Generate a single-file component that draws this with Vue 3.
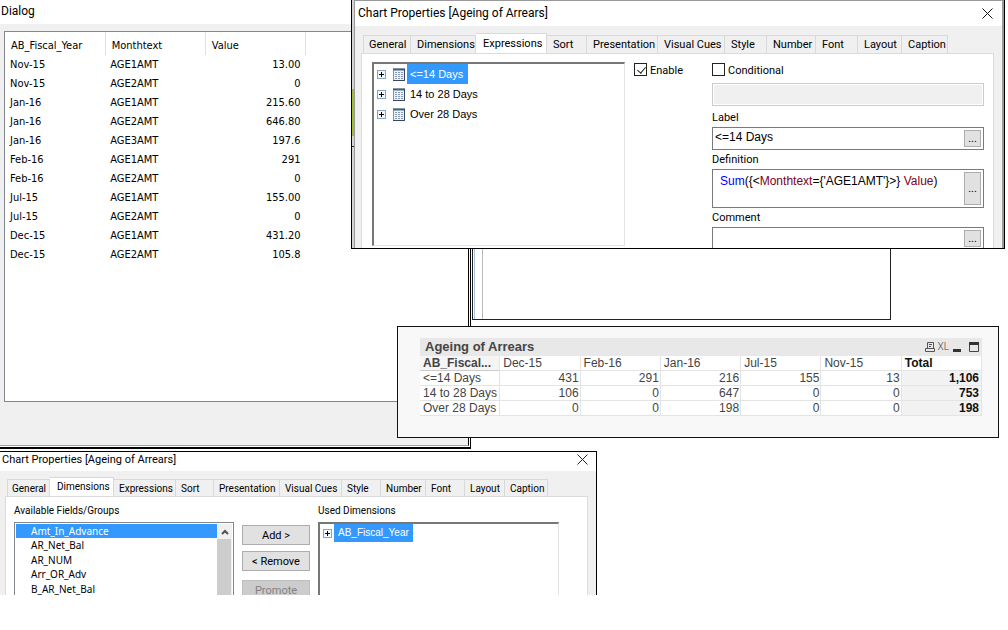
<script setup>
import { ref } from 'vue'

const fiscalRows = [
  ['Nov-15', 'AGE1AMT', '13.00'],
  ['Nov-15', 'AGE2AMT', '0'],
  ['Jan-16', 'AGE1AMT', '215.60'],
  ['Jan-16', 'AGE2AMT', '646.80'],
  ['Jan-16', 'AGE3AMT', '197.6'],
  ['Feb-16', 'AGE1AMT', '291'],
  ['Feb-16', 'AGE2AMT', '0'],
  ['Jul-15', 'AGE1AMT', '155.00'],
  ['Jul-15', 'AGE2AMT', '0'],
  ['Dec-15', 'AGE1AMT', '431.20'],
  ['Dec-15', 'AGE2AMT', '105.8'],
]

const tabNames = ['General', 'Dimensions', 'Expressions', 'Sort', 'Presentation', 'Visual Cues', 'Style', 'Number', 'Font', 'Layout', 'Caption']
const largeWidths = [48, 65, 71, 40, 71, 67, 42, 49, 42, 44, 46]
const smallWidths = [43, 64, 62, 38, 66, 62, 39, 45, 39, 40, 43]

const expressions = ['<=14 Days', '14 to 28 Days', 'Over 28 Days']
const fields = ['Amt_In_Advance', 'AR_Net_Bal', 'AR_NUM', 'Arr_OR_Adv', 'B_AR_Net_Bal']

const pivotHead = ['AB_Fiscal...', 'Dec-15', 'Feb-16', 'Jan-16', 'Jul-15', 'Nov-15', 'Total']
const pivotRows = [
  ['<=14 Days', '431', '291', '216', '155', '13', '1,106'],
  ['14 to 28 Days', '106', '0', '647', '0', '0', '753'],
  ['Over 28 Days', '0', '0', '198', '0', '0', '198'],
]

const enabled = ref(true)
const conditional = ref(false)
const label = ref('<=14 Days')
const comment = ref('')
</script>

<template>
  <main class="desktop">
    <section class="dialog" aria-label="Dialog">
      <div class="dialog-inner">
        <h2 class="title">Dialog</h2>
        <div class="dialog-body">
          <table class="fiscal">
            <thead>
              <tr><th>AB_Fiscal_Year</th><th>Monthtext</th><th>Value</th></tr>
            </thead>
            <tbody>
              <tr v-for="(row, i) in fiscalRows" :key="i">
                <td v-for="(cell, j) in row" :key="j">{{ cell }}</td>
              </tr>
            </tbody>
          </table>
        </div>
      </div>
    </section>

    <div class="back-panel"><div class="back-inner"></div></div>

    <section class="props" aria-label="Chart Properties, Expressions">
      <div class="edge"><i class="edge-green"></i><i class="edge-dark"></i></div>
      <div class="props-frame">
        <header class="titlebar">
          <h2 class="title">Chart Properties [Ageing of Arrears]</h2>
          <button class="close" aria-label="Close">
            <svg width="11" height="11" viewBox="0 0 11 11"><path d="M.5.5l10 10M10.5.5l-10 10" stroke="#111" fill="none" /></svg>
          </button>
        </header>
        <div class="tabs" role="tablist">
          <button v-for="(t, i) in tabNames" :key="t" role="tab" class="tab" :class="{ active: i === 2 }" :style="{ width: largeWidths[i] + 'px' }">{{ t }}</button>
        </div>
        <div class="page">
          <ul class="tree">
            <li v-for="(e, i) in expressions" :key="e">
              <button class="expander" aria-label="Expand">
                <svg width="9" height="9" viewBox="0 0 9 9"><rect x=".5" y=".5" width="8" height="8" fill="#f4f8fc" stroke="#8aa3bd" /><path d="M2 4.5h5M4.5 2v5" stroke="#000" /></svg>
              </button>
              <svg class="grid-icon" width="12" height="13" viewBox="0 0 12 13">
                <rect x=".5" y=".5" width="11" height="12" fill="#eef2f8" stroke="#8090a8" />
                <path d="M0 .5h12" stroke="#8794a8" /><path d="M0 1.5h12" stroke="#4c5b74" /><path d="M1 2.5h10" stroke="#9badc4" />
                <path d="M2 4.5h8M2 6.5h8M2 8.5h8M2 10.5h8" stroke="#8599b8" stroke-dasharray="2 1" />
                <path d="M0 12.5h11.5V1" stroke="#39475c" fill="none" />
              </svg>
              <span class="node" :class="{ selected: i === 0 }">{{ e }}</span>
            </li>
          </ul>
          <div class="enable">
            <label class="check"><input v-model="enabled" type="checkbox" />Enable</label>
          </div>
          <div class="form">
            <label class="check"><input v-model="conditional" type="checkbox" />Conditional</label>
            <input class="field disabled" aria-label="Condition" disabled />
            <label class="caption first" for="expr-label">Label</label>
            <div class="field"><input id="expr-label" v-model="label" /><button class="more">...</button></div>
            <label id="def-label" class="caption">Definition</label>
            <div class="field tall">
              <div class="code" role="textbox" aria-labelledby="def-label" contenteditable="true"><span class="fn">Sum</span>({&lt;<span class="name">Monthtext</span>={'AGE1AMT'}&gt;} <span class="name">Value</span>)</div>
              <button class="more">...</button>
            </div>
            <label class="caption" for="expr-comment">Comment</label>
            <div class="field"><input id="expr-comment" v-model="comment" /><button class="more">...</button></div>
          </div>
        </div>
      </div>
    </section>

    <section class="pivot" aria-label="Ageing of Arrears">
      <header class="pivot-title">
        <h2>Ageing of Arrears</h2>
        <button aria-label="Print">
          <svg width="10" height="10" viewBox="0 0 10 10"><path d="M2.5 6V.5h6V6M.5 9.5v-3h9v3zM4 2.5h3M4 4.5h2" stroke="#555" fill="none" /></svg>
        </button>
        <button class="xl">XL</button>
        <button aria-label="Minimize"><svg width="10" height="10" viewBox="0 0 10 10"><path d="M1 8.5h8" stroke="#333" stroke-width="3" /></svg></button>
        <button class="max" aria-label="Maximize"><svg width="10" height="10" viewBox="0 0 10 10"><path d="M.5 1v8.5h9V1" stroke="#444" fill="none" /><path d="M0 1.5h10" stroke="#333" stroke-width="3" /></svg></button>
      </header>
      <table class="pivot-table">
        <thead>
          <tr><th v-for="h in pivotHead" :key="h">{{ h }}</th></tr>
        </thead>
        <tbody>
          <tr v-for="row in pivotRows" :key="row[0]">
            <td v-for="(c, i) in row" :key="i">{{ c }}</td>
          </tr>
        </tbody>
      </table>
    </section>

    <section class="props small" aria-label="Chart Properties, Dimensions">
      <div class="props-frame">
        <header class="titlebar">
          <h2 class="title">Chart Properties [Ageing of Arrears]</h2>
          <button class="close" aria-label="Close">
            <svg width="11" height="11" viewBox="0 0 11 11"><path d="M.5.5l10 10M10.5.5l-10 10" stroke="#222" fill="none" /></svg>
          </button>
        </header>
        <div class="tabs" role="tablist">
          <button v-for="(t, i) in tabNames" :key="t" role="tab" class="tab" :class="{ active: i === 1 }" :style="{ width: smallWidths[i] + 'px' }">{{ t }}</button>
        </div>
        <div class="page">
          <div class="available">
            <h3 id="avail">Available Fields/Groups</h3>
            <div class="listbox">
              <ul role="listbox" aria-labelledby="avail">
                <li v-for="(f, i) in fields" :key="f" role="option" :class="{ selected: i === 0 }">{{ f }}</li>
              </ul>
              <div class="scroll">
                <button aria-label="Scroll up"><svg width="8" height="6" viewBox="0 0 8 6"><path d="M1 5l3-3 3 3" stroke="#505050" stroke-width="2" fill="none" /></svg></button>
                <div class="thumb"></div>
              </div>
            </div>
          </div>
          <div class="actions">
            <button>Add &gt;</button>
            <button>&lt; Remove</button>
            <button class="promote" disabled>Promote</button>
          </div>
          <div class="used">
            <h3>Used Dimensions</h3>
            <ul class="tree">
              <li>
                <button class="expander" aria-label="Expand">
                  <svg width="9" height="9" viewBox="0 0 9 9"><rect x=".5" y=".5" width="8" height="8" fill="#f4f8fc" stroke="#8aa3bd" /><path d="M2 4.5h5M4.5 2v5" stroke="#000" /></svg>
                </button>
                <span class="node selected">AB_Fiscal_Year</span>
              </li>
            </ul>
          </div>
        </div>
      </div>
    </section>
  </main>
</template>

<style>
body { margin: 0; background: #fff; }
</style>

<style scoped>
* { box-sizing: border-box; }
.desktop { position: relative; min-height: 100vh; overflow: hidden; color: #000; font: 11px/14px Roboto, sans-serif; }
h2, h3, ul { margin: 0; padding: 0; font-weight: 400; list-style: none; }
button { margin: 0; padding: 0; border: 0; background: none; color: inherit; font: inherit; }
svg { display: block; }
.title { font: 12px/16px Roboto, sans-serif; }

/* Dialog window */
.dialog { position: absolute; left: 0; top: 0; width: 471px; height: 449px; border-right: 1px solid #000; border-bottom: 2px solid #000; padding-right: 1px; }
.dialog-inner { display: flex; flex-direction: column; height: 446px; border-right: 1px solid #000; border-bottom: 1px solid #a0a0a0; background: #f0f0f0; }
.dialog .title { flex: none; height: 24px; padding: 3px 1px; background: #fff; }
.dialog-body { height: 371px; margin: 7px 0 0 4px; border: 1px solid #828790; border-right: 0; background: #fff; }
.fiscal { width: 301px; table-layout: fixed; border-collapse: collapse; font: 11px/19px "DejaVu Sans Condensed", sans-serif; }
.fiscal th { height: 23px; padding: 4px 0 0 6px; border-right: 1px solid #e0e0e0; font-weight: 400; text-align: left; }
.fiscal td { height: 19px; padding: 0 0 0 5px; }
.fiscal td:last-child { padding-right: 5px; text-align: right; }

/* Empty window behind */
.back-panel { position: absolute; left: 472px; top: 240px; width: 419px; height: 80px; border: 1px solid #222; background: #fff; padding-left: 1px; }
.back-inner { width: 9px; height: 100%; border-left: 1px solid #a9c4dc; border-right: 1px solid #bbb; }

/* Chart properties windows */
.props { position: absolute; left: 351px; top: 0; display: flex; width: 654px; height: 249px; border: solid #000; border-width: 0 1px 1px; overflow: hidden; background: #f0f0f0; }
.edge { display: flex; flex-direction: column; width: 2px; background: #d4d4d4; }
.edge-green { height: 47px; margin-top: 89px; background: #9fbe3a; }
.edge-dark { height: 1px; margin-top: 10px; background: #222; }
.props-frame { flex: 1; display: flex; flex-direction: column; border: 1px solid #999; border-width: 1px 2px 0 1px; }
.titlebar { display: flex; justify-content: space-between; flex: none; height: 25px; padding: 4px 9px 0 3px; background: #fff; }
.close { width: 11px; height: 11px; margin-top: 3px; }
.tabs { display: flex; align-items: flex-end; flex: none; height: 27px; padding-left: 8px; }
.tab { flex: none; height: 19px; margin-bottom: -1px; padding: 1px 0 0 6px; border: 1px solid #d9d9d9; border-left-width: 0; text-align: left; white-space: nowrap; }
.tab:first-child { border-left-width: 1px; padding-left: 5px; }
.tab.active { height: 21px; padding: 0 0 1px 7px; border-bottom: 0; background: #fff; }
.page { flex: 1; display: flex; margin: 0 8px 0 6px; border: 1px solid #dcdcdc; border-bottom: 0; background: #fff; }
.tree { width: 253px; height: 184px; margin: 8px 0 0 10px; padding-left: 3px; border: 1px solid #e3e3e3; border-top: 2px solid #777; border-left: 2px solid #777; }
.tree li { display: flex; align-items: center; height: 20px; }
.expander { width: 9px; }
.grid-icon { margin-left: 7px; }
.node { margin-left: 2px; padding: 3px 5px 3px 3px; font: 11px/14px "Liberation Sans", Arial, sans-serif; }
.selected { background: #39f; color: #fff; }
.enable { width: 87px; padding: 9px 0 0 9px; }
.check { display: flex; align-items: flex-start; gap: 3px; height: 14px; line-height: 16px; }
.check input { appearance: none; display: block; flex: none; width: 13px; height: 13px; margin: 0; border: 1px solid #222; background: #fff; }
.check input:checked::after { content: ""; display: block; width: 4px; height: 7px; margin: 1px 0 0 4px; border: solid #222; border-width: 0 1px 1px 0; transform: rotate(40deg); }
.form { flex: 1; min-width: 0; display: flex; flex-direction: column; padding: 9px 9px 0 0; }
.field { display: flex; flex: none; height: 23px; border: 1px solid #7a7a7a; background: #fff; padding: 2px; }
.field.disabled { width: 100%; margin-top: 6px; border-color: #ccc; background: #f0f0f0; box-shadow: inset 0 0 0 1px #fff; }
.field > input { flex: 1; min-width: 0; height: 14px; padding: 0; border: 0; outline: 0; font: 12px/14px "Liberation Sans", Arial, sans-serif; }
.caption { display: block; height: 14px; margin: 3px 0 2px; }
.caption.first { margin-top: 5px; }
.field.tall { height: 39px; }
.code { flex: 1; padding: 1px 5px; outline: 0; font: 12px/17px "Liberation Sans", Arial, sans-serif; white-space: nowrap; }
.fn { color: #00f; }
.name { color: #800020; }
.more { width: 17px; border: 1px solid #adadad; background: #e1e1e1; }

/* Pivot chart */
.pivot { position: absolute; left: 397px; top: 326px; width: 602px; height: 112px; padding: 11px 16px 0 22px; border: 1px solid #111; background: #f8f8f8; color: #444; font: 12px/14px "Liberation Sans", Arial, sans-serif; }
.pivot-title { display: flex; align-items: center; height: 18px; padding: 0 3px 0 5px; background: #e8e8e8; }
.pivot-title h2 { flex: 1; font: bold 13px/18px "Liberation Sans", Arial, sans-serif; }
.pivot-title button { margin-left: 3px; }
.pivot-title .max { margin-left: 7px; }
.pivot-title .xl { font: 300 10px/14px Roboto, sans-serif; color: #444; }
.pivot-table { width: 100%; height: 60px; table-layout: fixed; border-collapse: separate; border-spacing: 0; background: #fff; line-height: 13px; }
.pivot-table th, .pivot-table td { padding: 1px 1px 0 3px; border-right: 1px solid #e4e4e4; border-bottom: 1px solid #e4e4e4; white-space: nowrap; }
.pivot-table th { text-align: left; font-weight: 400; }
.pivot-table th:first-child { font-weight: 700; background: #f5f5f5; border-bottom-color: #ccc; }
.pivot-table td { text-align: right; }
.pivot-table td:first-child { text-align: left; }
.pivot-table th:last-child { font-weight: 700; color: #111; }
.pivot-table td:last-child { padding-right: 2px; font-weight: 700; color: #111; background: #f2f2f2; }

/* Dimensions window */
.small { left: 0; top: 451px; width: 597px; height: 144px; border-width: 1px 1px 0 0; }
.small .props-frame { border-width: 0; }
.small .titlebar { height: 19px; padding: 0 8px 0 2px; }
.small .title { font-size: 11px; }
.small .close { margin-top: 2px; }
.small .tabs { height: 25px; padding-left: 7px; }
.small .tab { height: 18px; font-size: 10px; padding-left: 5px; }
.small .tab:first-child { padding-left: 4px; }
.small .tab.active { height: 20px; padding-left: 7px; }
.small .page { margin: 0 8px 0 5px; padding-left: 8px; }
h3 { height: 25px; padding-top: 7px; font: 10px/14px Roboto, sans-serif; }
.available { width: 220px; display: flex; flex-direction: column; }
.listbox { flex: 1; display: flex; border: 1px solid #828790; border-bottom: 0; padding: 1px 1px 0; }
.listbox ul { flex: 1; display: grid; grid-template-rows: repeat(5, 1fr); height: 72px; font: 10px/14px "Noto Sans", sans-serif; }
.listbox li { padding-left: 15px; }
.scroll { width: 15px; display: flex; flex-direction: column; background: #f0f0f0; }
.scroll button { display: grid; place-items: center; height: 15px; }
.thumb { flex: 1; background: #cdcdcd; margin-right: 1px; }
.actions { width: 68px; display: flex; flex-direction: column; gap: 6px; margin: 28px 8px 0; }
.actions button { flex: none; height: 20px; padding-top: 1px; border: 1px solid #adadad; background: #e1e1e1; }
.actions .promote { height: 20px; margin-top: 3px; border-color: #bfbfbf; background: #ccc; color: #838383; }
.used { width: 241px; display: flex; flex-direction: column; }
.used .tree { flex: 1; width: 100%; margin: 0; border-bottom: 0; }
.used .tree li { height: 18px; }
.used .node { padding: 2px 4px; font-size: 10px; }
</style>
